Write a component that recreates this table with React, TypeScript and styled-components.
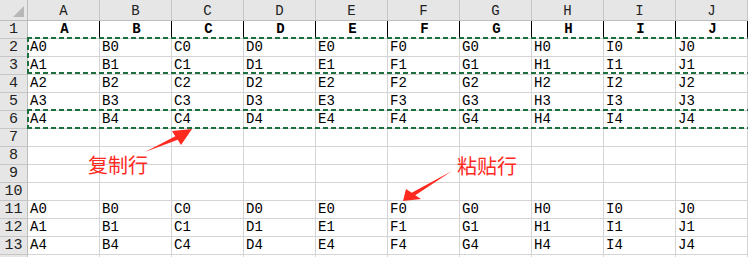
import styled, { createGlobalStyle } from "styled-components";

const GlobalStyle = createGlobalStyle`
  html, body {
    margin: 0;
    padding: 0;
    background: #fff;
    overflow: hidden;
  }
`

const COLS = ["A", "B", "C", "D", "E", "F", "G", "H", "I", "J"];
const ANTS = "#1e6f3f";
const RED = "#ff2a1f";

// what each row holds, by row number (the last one is only half on screen)
const rows: (string | null)[] = [
    "head", "0", "1", "2", "3", "4", null, null, null, null, "0", "1", "4", null,
];

const Sheet = styled.div`
  position: relative;
  display: grid;
  grid-template-columns: 28px repeat(10, 72px);
  grid-template-rows: 21px;
  grid-auto-rows: 18px;
  height: 257px;
  overflow: hidden;
  font-family: "Liberation Mono", "Noto Sans CJK SC", monospace;
  font-size: 14px;
  color: #000;
`

const Corner = styled.div`
  position: relative;
  box-sizing: border-box;
  background: #e6e6e6;
  border-right: 1px solid #bdbdbd;
  border-bottom: 1px solid #bdbdbd;
  &::after {
    content: "";
    position: absolute;
    right: 3px;
    bottom: 3px;
    border-left: 11px solid transparent;
    border-bottom: 11px solid #b7b7b7;
  }
`

const ColHead = styled.div`
  box-sizing: border-box;
  display: flex;
  align-items: center;
  justify-content: center;
  padding-top: 2px;
  background: #e6e6e6;
  border-right: 1px solid #c6c6c6;
  border-bottom: 1px solid #bdbdbd;
  color: #222;
`

const RowHead = styled.div`
  box-sizing: border-box;
  display: flex;
  align-items: flex-end;
  justify-content: center;
  padding-bottom: 1px;
  line-height: 15px;
  font-size: 15px;
  background: #e6e6e6;
  border-right: 1px solid #bdbdbd;
  border-bottom: 1px solid #c6c6c6;
  color: #222;
`

const Cell = styled.div<{ $title?: boolean }>`
  box-sizing: border-box;
  display: flex;
  align-items: flex-end;
  justify-content: ${p => p.$title ? "center" : "flex-start"};
  padding: 0 0 1px 2px;
  line-height: 15px;
  font-weight: ${p => p.$title ? 700 : 400};
  border-right: 1px solid ${p => p.$title ? "#000" : "#d4d4d4"};
  border-bottom: 1px solid #d4d4d4;
  white-space: nowrap;
`

const Marquee = styled.div<{ $top: number; $height: number }>`
  position: absolute;
  left: 27px;
  right: -4px;
  top: ${p => p.$top}px;
  height: ${p => p.$height}px;
  pointer-events: none;
  background:
    repeating-linear-gradient(90deg, ${ANTS} 0 5px, transparent 5px 8px) left top / 100% 2px no-repeat,
    repeating-linear-gradient(90deg, ${ANTS} 0 5px, transparent 5px 8px) left bottom / 100% 2px no-repeat,
    repeating-linear-gradient(180deg, ${ANTS} 0 5px, transparent 5px 8px) left top / 2px 100% no-repeat;
`

const Note = styled.div<{ $x: number; $y: number }>`
  position: absolute;
  left: ${p => p.$x}px;
  top: ${p => p.$y}px;
  font-family: "Noto Sans CJK SC", sans-serif;
  font-size: 20px;
  line-height: 20px;
  color: ${RED};
  white-space: nowrap;
`

const Arrows = styled.svg`
  position: absolute;
  left: 0;
  top: 0;
  pointer-events: none;
`

function App() {
    return (
        <>
            <GlobalStyle/>
            <Sheet>
                <Corner/>
                {COLS.map(c => <ColHead key={c}>{c}</ColHead>)}
                {rows.map((kind, i) => [
                    <RowHead key={"r" + i}>{i < 13 ? i + 1 : ""}</RowHead>,
                    ...COLS.map(c =>
                        kind === "head"
                            ? <Cell key={c + i} $title>{c}</Cell>
                            : <Cell key={c + i}>{kind === null ? "" : c + kind}</Cell>
                    ),
                ])}

                <Marquee $top={37} $height={37}/>
                <Marquee $top={109} $height={20}/>

                <Note $x={88} $y={155}>复制行</Note>
                <Note $x={457} $y={156}>粘贴行</Note>

                <Arrows width={748} height={257}>
                    <polygon fill={RED}
                             points="145,152 175.3,136.2 172,131 192,129 181,145 177.7,139.8"/>
                    <polygon fill={RED}
                             points="452,171 411.7,192.8 406,189 403,201 421,199 415.3,195.2"/>
                </Arrows>
            </Sheet>
        </>
    )
}

export default App;
